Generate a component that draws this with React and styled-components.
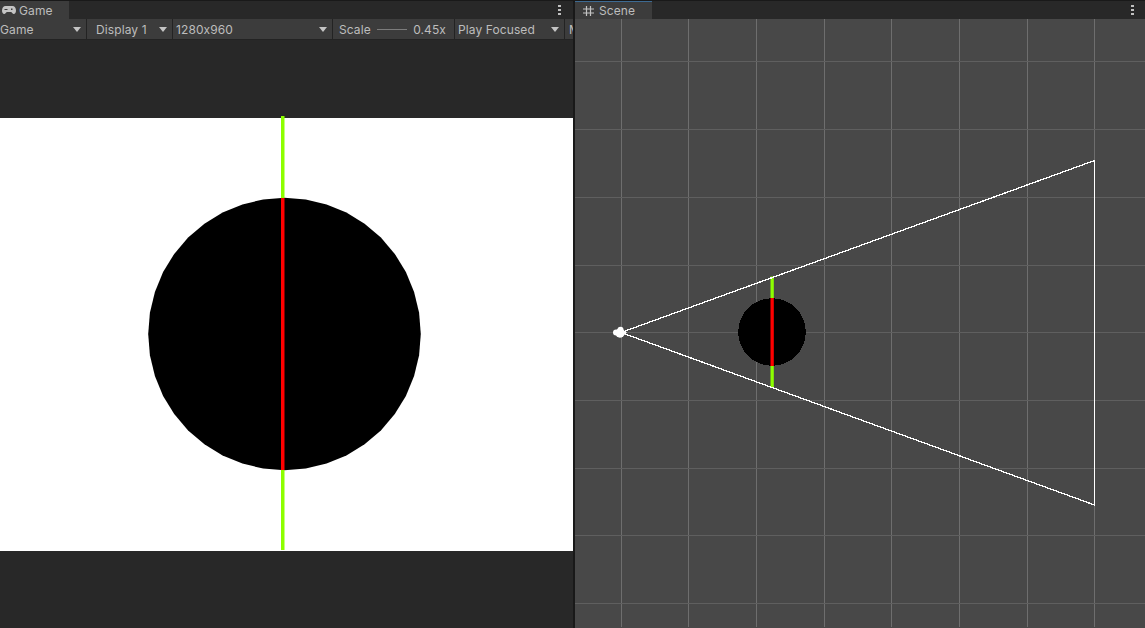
import React from "react";
import styled, { createGlobalStyle } from "styled-components";

const GlobalStyle = createGlobalStyle`
  html, body {
    margin: 0;
    height: 100%;
    background: #191919;
    overflow: hidden;
  }
  #root {
    height: 100%;
  }
`

const Workspace = styled.div`
  display: flex;
  width: 1145px;
  height: 628px;
  gap: 2px;
  background: #191919;
  font-family: Inter, "Liberation Sans", sans-serif;
  font-size: 12px;
  color: #bdbdbd;
`

const Panel = styled.section`
  width: ${({ width }) => width}px;
  display: flex;
  flex-direction: column;
  overflow: hidden;
`

const TabBar = styled.div`
  height: 18px;
  margin-top: 1px;
  flex: none;
  display: flex;
  align-items: stretch;
  justify-content: space-between;
  background: #282828;
`

const Tab = styled.div`
  width: ${({ width }) => width}px;
  padding-left: ${({ inset }) => inset}px;
  box-sizing: border-box;
  display: flex;
  align-items: center;
  gap: ${({ space }) => space}px;
  background: #3c3c3c;
  letter-spacing: 0.1px;
  ${({ active }) => active && `
    border-top: 1px solid #3d6a92;
  `}
`

const MoreDots = styled.div`
  width: 3px;
  margin: 4px ${({ right }) => right}px 0 0;
  height: 10px;
  background: repeating-linear-gradient(#c0c0c0 0 2px, transparent 2px 4px);
`

const Toolbar = styled.div`
  height: 20px;
  flex: none;
  display: flex;
  gap: 1px;
  background: #232323;
  border-bottom: 1px solid #232323;
  overflow: hidden;
`

const ToolItem = styled.div`
  width: ${({ width }) => width}px;
  flex: none;
  box-sizing: border-box;
  padding: 0 ${({ end }) => end || 3}px 0 ${({ inset }) => inset || 0}px;
  display: flex;
  align-items: center;
  justify-content: space-between;
  background: #3c3c3c;
  white-space: nowrap;
  letter-spacing: 0.1px;
`

const Caret = styled.span`
  width: 0;
  height: 0;
  margin-right: 2px;
  border-left: 4.5px solid transparent;
  border-right: 4.5px solid transparent;
  border-top: 5px solid #c4c4c4;
`

const ScaleTrack = styled.span`
  width: 30px;
  height: 1px;
  background: #7c7c7c;
`

const GameView = styled.div`
  flex: 1;
  display: flex;
  flex-direction: column;
  justify-content: center;
  background: #282828;
`

const GameViewport = styled.div`
  position: relative;
  height: 433px;
  margin-top: 1px;
  background: #fff;
`

const Overlay = styled.svg`
  position: absolute;
  left: 0;
  top: -2px;
  overflow: visible;
`

const SceneView = styled.div`
  flex: 1;
  background: #484848;
  margin-bottom: 1px;
`

const GridIcon = () => (
  <svg width="11" height="10" viewBox="0 0 11 10" stroke="#c4c4c4" strokeWidth="1.2">
    <path d="M3.500 0v10M7.500 0v10M0 3h11M0 7h11" />
  </svg>
)

const GamepadIcon = () => (
  <svg width="14" height="8" viewBox="0 0 14 8">
    <path d="M3.500 0h7C12.500 0 14 2 14 4.500 14 6.500 13 8 11.800 8 10.500 8 10 6 8.800 6H5.200C4 6 3.500 8 2.200 8 1 8 0 6.500 0 4.500 0 2 1.500 0 3.500 0z" fill="#c4c4c4" />
    <path d="M2.500 3h3v1h-3zM9 2.500h1.500V4H9z" fill="#3c3c3c" />
  </svg>
)

// low poly circle, same as the unity sprite outline
const circlePoints = (cx, cy, r, sides) =>
  Array.from({ length: sides }, (_, i) => {
    const a = (i / sides) * Math.PI * 2
    return `${(cx + r * Math.cos(a)).toFixed(1)},${(cy + r * Math.sin(a)).toFixed(1)}`
  }).join(" ")

const verticalLines = [621, 688, 756, 824, 891, 959, 1027, 1094]
const horizontalLines = [61, 129, 197, 265, 332, 400, 468, 535, 603]
const sceneLeft = 575

const App = () => {
  return (
    <>
      <GlobalStyle />
      <Workspace>
        <Panel width={573}>
          <TabBar>
            <Tab width={69} inset={2} space={3}>
              <GamepadIcon />
              Game
            </Tab>
            <MoreDots right={12} />
          </TabBar>
          <Toolbar>
            <ToolItem width={86}>Game<Caret /></ToolItem>
            <ToolItem width={85} inset={9}>Display 1<Caret /></ToolItem>
            <ToolItem width={159} inset={3}>1280x960<Caret /></ToolItem>
            <ToolItem width={121} inset={6} end={8}>
              Scale<ScaleTrack />0.45x
            </ToolItem>
            <ToolItem width={109} inset={3}>Play Focused<Caret /></ToolItem>
            <ToolItem width={40} inset={4}>M</ToolItem>
          </Toolbar>
          <GameView>
            <GameViewport>
              <Overlay width="573" height="437" viewBox="0 116 573 437">
                <polygon points={circlePoints(284.5, 334, 136.3, 40)} fill="#000" />
                <rect x="281" y="116" width="3.500" height="82" fill="#8cff00" />
                <rect x="281" y="470" width="3.500" height="80" fill="#8cff00" />
                <rect x="281" y="198" width="3.500" height="272" fill="#ff0000" />
              </Overlay>
            </GameViewport>
          </GameView>
        </Panel>
        <Panel width={570}>
          <TabBar>
            <Tab width={77} inset={8} space={5} active>
              <GridIcon />
              Scene
            </Tab>
            <MoreDots right={11} />
          </TabBar>
          <SceneView>
            <svg width="570" height="608" viewBox={`${sceneLeft} 19 570 608`}>
              {verticalLines.map((x) => (
                <line key={x} x1={x + 0.5} x2={x + 0.5} y1="19" y2="627" stroke="#6e6e6e" />
              ))}
              {horizontalLines.map((y) => (
                <line key={y} x1={sceneLeft} x2="1145" y1={y + 0.5} y2={y + 0.5} stroke="#5f5f5f" />
              ))}
              <polygon points={circlePoints(772, 332, 33.8, 32)} fill="#000" shapeRendering="crispEdges" />
              <rect x="770.500" y="276.500" width="3.300" height="21.500" fill="#8cff00" />
              <rect x="770.500" y="366" width="3.300" height="21.500" fill="#8cff00" />
              <rect x="770.500" y="298" width="3.300" height="68" fill="#ff0000" />
              <path d="M621 332.500 1094.500 160.500V505L621 332.500" fill="none" stroke="#fff" strokeWidth="1.300" shapeRendering="crispEdges" />
              <g fill="#fff">
                <circle cx="616" cy="332.500" r="3" />
                <circle cx="620" cy="333" r="4.700" />
                <circle cx="620.500" cy="329.800" r="3" />
                <path d="M621 328.500 627 332.500 621 337.500z" />
              </g>
            </svg>
          </SceneView>
        </Panel>
      </Workspace>
    </>
  )
}

export default App
